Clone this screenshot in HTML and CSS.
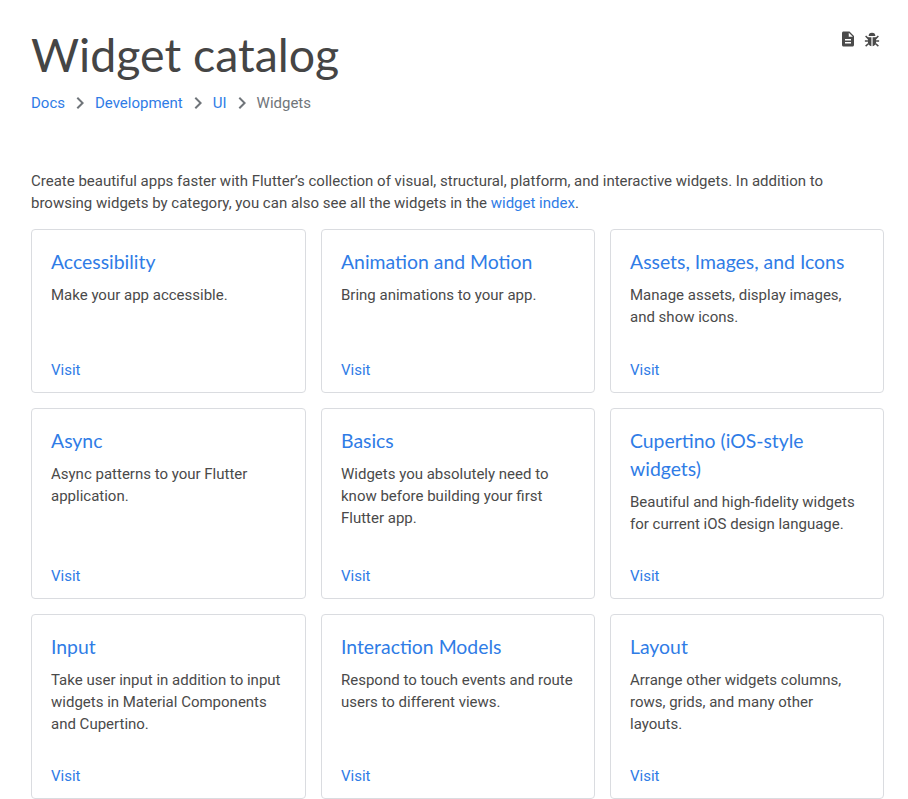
FILE: index.html
```html
<!DOCTYPE html>
<html lang="en">
  <head>
    <meta charset="UTF-8" />
    <meta name="viewport" content="width=device-width, initial-scale=1.0" />
    <title>Widget catalog</title>
    <link rel="stylesheet" href="styles.css">
  </head>

  <body>
    <div class="container">
      <div class="page-actions">
        <svg class="icon" viewBox="0 0 24 24"><path d="M14 2H6c-1.100 0-2 .9-2 2v16c0 1.100.9 2 2 2h12c1.100 0 2-.9 2-2V8l-6-6zm2 16H8v-2h8v2zm0-4H8v-2h8v2zm-3-5V3.500L18.500 9H13z"/></svg>
        <svg class="icon" viewBox="0 0 24 24">
          <path d="M7.500 8a4.500 4.500 0 0 1 9 0z"/>
          <path d="M6.500 9.500H11.200V21.500C8.500 21.200 6.500 19 6.500 16zM17.500 9.500H12.800V21.500C15.500 21.200 17.500 19 17.500 16z"/>
          <path class="icon-legs" d="M7 11.500 3.500 8M6.500 14.500H2.500M7.500 18 3.500 21.500M17 11.500 20.500 8M17.500 14.500H21.500M16.500 18 20.500 21.500"/>
        </svg>
      </div>

      <h1 class="title">Widget catalog</h1>

      <nav class="breadcrumb">
        <a href="#">Docs</a>
        <svg class="chevron" viewBox="0 0 24 24"><path d="M10 6 8.590 7.410 13.170 12l-4.580 4.590L10 18l6-6z"/></svg>
        <a href="#">Development</a>
        <svg class="chevron" viewBox="0 0 24 24"><path d="M10 6 8.590 7.410 13.170 12l-4.580 4.590L10 18l6-6z"/></svg>
        <a href="#">UI</a>
        <svg class="chevron" viewBox="0 0 24 24"><path d="M10 6 8.590 7.410 13.170 12l-4.580 4.590L10 18l6-6z"/></svg>
        <span>Widgets</span>
      </nav>

      <p class="intro">
        Create beautiful apps faster with Flutter’s collection of visual, structural, platform, and interactive widgets. In addition to browsing widgets by category, you can also see all the widgets in the <a href="#">widget index</a>.
      </p>

      <div class="card-grid">
        <div class="card">
          <h2 class="card-title"><a href="#">Accessibility</a></h2>
          <p class="card-text">Make your app accessible.</p>
          <a class="card-link" href="#">Visit</a>
        </div>
        <div class="card">
          <h2 class="card-title"><a href="#">Animation and Motion</a></h2>
          <p class="card-text">Bring animations to your app.</p>
          <a class="card-link" href="#">Visit</a>
        </div>
        <div class="card">
          <h2 class="card-title"><a href="#">Assets, Images, and Icons</a></h2>
          <p class="card-text">Manage assets, display images, and show icons.</p>
          <a class="card-link" href="#">Visit</a>
        </div>
        <div class="card">
          <h2 class="card-title"><a href="#">Async</a></h2>
          <p class="card-text">Async patterns to your Flutter application.</p>
          <a class="card-link" href="#">Visit</a>
        </div>
        <div class="card">
          <h2 class="card-title"><a href="#">Basics</a></h2>
          <p class="card-text">Widgets you absolutely need to know before building your first Flutter app.</p>
          <a class="card-link" href="#">Visit</a>
        </div>
        <div class="card">
          <h2 class="card-title"><a href="#">Cupertino (iOS-style widgets)</a></h2>
          <p class="card-text">Beautiful and high-fidelity widgets for current iOS design language.</p>
          <a class="card-link" href="#">Visit</a>
        </div>
        <div class="card">
          <h2 class="card-title"><a href="#">Input</a></h2>
          <p class="card-text">Take user input in addition to input widgets in Material Components and Cupertino.</p>
          <a class="card-link" href="#">Visit</a>
        </div>
        <div class="card">
          <h2 class="card-title"><a href="#">Interaction Models</a></h2>
          <p class="card-text">Respond to touch events and route users to different views.</p>
          <a class="card-link" href="#">Visit</a>
        </div>
        <div class="card">
          <h2 class="card-title"><a href="#">Layout</a></h2>
          <p class="card-text">Arrange other widgets columns, rows, grids, and many other layouts.</p>
          <a class="card-link" href="#">Visit</a>
        </div>
      </div>
    </div>
  </body>
</html>
```

FILE: styles.css
```css
body {
  margin: 0;
  background-color: #fff;
  color: #4a4a4a;
  font-family: Roboto, sans-serif;
  font-size: 15px;
  line-height: 22px;
}
a {
  color: #2f7ce6;
  text-decoration: none;
}
.container {
  position: relative;
  padding: 24px 24px 0 31px;
}
.page-actions {
  position: absolute;
  top: 30px;
  right: 27px;
  display: flex;
  gap: 6px;
}
.icon {
  width: 18px;
  height: 18px;
  fill: #4a4a4a;
}
.icon-legs {
  fill: none;
  stroke: #4a4a4a;
  stroke-width: 2;
}
.title {
  margin: 0;
  font-family: Lato, sans-serif;
  font-size: 46.5px;
  font-weight: 400;
  line-height: 60px;
  color: #454545;
}
.breadcrumb {
  display: flex;
  align-items: center;
  margin-top: 7px;
  color: #70757a;
}
.chevron {
  width: 24px;
  height: 24px;
  margin: 0 3px;
  fill: #70757a;
}
.intro {
  margin: 55px 0 0;
}
.card-grid {
  display: grid;
  grid-template-columns: 275px 274px 274px;
  gap: 15px;
  margin-top: 15px;
}
.card {
  display: flex;
  flex-direction: column;
  box-sizing: border-box;
  min-height: 164px;
  padding: 18px 19px 11px;
  border: 1px solid #dadce0;
  border-radius: 4px;
}
.card-title {
  margin: 0;
  font-family: Lato, sans-serif;
  font-size: 19.4px;
  font-weight: 400;
  line-height: 28px;
}
.card-text {
  margin: 8px 0 30px;
}
.card-link {
  margin-top: auto;
}
```
